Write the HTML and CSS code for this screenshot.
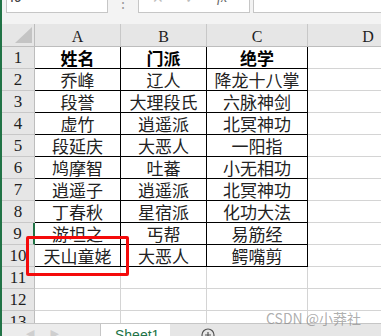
FILE: index.html
```html
<!DOCTYPE html>
<html lang="zh">
<head>
<meta charset="UTF-8" />
<title>Sheet1</title>
<link rel="stylesheet" href="styles.css">
</head>
<body>

<div class="app">
  <div class="top">
    <div class="formula-bar">
      <div class="name-box">I9<span class="drop">▾</span></div>
      <div class="dots">⋮</div>
      <div class="fx-box">
        <span class="fx-btn">✕</span>
        <span class="fx-btn">✓</span>
        <span class="fx">fx</span>
      </div>
      <div class="formula-input"></div>
    </div>
  </div>

  <div class="sheet" id="sheet">
    <!-- cells are rendered here -->
  </div>

  <div class="tabs">
    <div class="tab-nav"><span>◀</span><span>▶</span></div>
    <div class="tab active">Sheet1</div>
    <div class="tab-rest">
      <svg class="add-sheet" width="14" height="14" viewBox="0 0 14 14">
        <circle cx="7" cy="7" r="6" fill="none" stroke="#555" stroke-width="1.2"/>
        <path d="M7 4v6M4 7h6" stroke="#555" stroke-width="1.2"/>
      </svg>
    </div>
  </div>

  <div class="highlight"></div>
  <div class="watermark">CSDN @小莽社</div>
</div>

<script>
// sheet data (row 1 is the header row)
const data = [
  ['姓名', '门派', '绝学'],
  ['乔峰', '辽人', '降龙十八掌'],
  ['段誉', '大理段氏', '六脉神剑'],
  ['虚竹', '逍遥派', '北冥神功'],
  ['段延庆', '大恶人', '一阳指'],
  ['鸠摩智', '吐蕃', '小无相功'],
  ['逍遥子', '逍遥派', '北冥神功'],
  ['丁春秋', '星宿派', '化功大法'],
  ['游坦之', '丐帮', '易筋经'],
  ['天山童姥', '大恶人', '鳄嘴剪']
];
const totalRows = 13;

function cell(cls, text) {
  const div = document.createElement('div');
  div.className = cls;
  if (text) div.textContent = text;
  return div;
}

function renderSheet() {
  const sheet = document.getElementById('sheet');

  // column headers
  const corner = cell('corner');
  corner.innerHTML = '<svg width="17" height="16" viewBox="0 0 17 16"><path d="M17 0V16H0Z" fill="#c4c4c4"/></svg>';
  sheet.appendChild(corner);
  ['A', 'B', 'C', 'D'].forEach(letter => sheet.appendChild(cell('col-head', letter)));

  // rows
  for (let r = 1; r <= totalRows; r++) {
    sheet.appendChild(cell('row-head' + (r === 9 ? ' sel' : ''), String(r)));
    const values = data[r - 1] || [];
    for (let c = 0; c < 4; c++) {
      let cls = 'cell';
      if (values.length && c < 3) cls += ' boxed';
      if (r === 1) cls += ' bold';
      sheet.appendChild(cell(cls, values[c] || ''));
    }
  }
}

renderSheet();
</script>

</body>
</html>
```

FILE: styles.css
```css
html, body {
  margin: 0;
  padding: 0;
  height: 336px;
  overflow: hidden;
}
body {
  font-family: 'Liberation Serif', serif;
  background: #f3f3f3;
}
.app {
  position: relative;
  height: 336px;
  border-left: 2px solid #217346;
  overflow: hidden;
}

/* formula bar, cut off at the top */
.top {
  height: 24px;
  background: #f3f3f3;
}
.formula-bar {
  height: 13px;
  overflow: hidden;
  display: flex;
  align-items: flex-end;
}
.name-box {
  position: relative;
  box-sizing: border-box;
  margin-left: 4px;
  width: 102px;
  height: 24px;
  background: #fff;
  border: 1px solid #c6c6c6;
  font-family: 'Liberation Sans', sans-serif;
  font-size: 14px;
  line-height: 14px;
  color: #444;
  padding-left: 3px;
}
.drop {
  position: absolute;
  right: 6px;
  top: 0;
  font-size: 10px;
  color: #555;
}
.dots {
  width: 30px;
  height: 24px;
  text-align: center;
  color: #999;
  font-size: 14px;
  line-height: 30px;
}
.fx-box {
  box-sizing: border-box;
  width: 112px;
  height: 24px;
  background: #fff;
  border: 1px solid #c6c6c6;
  display: flex;
  align-items: flex-start;
  font-family: 'DejaVu Sans', sans-serif;
  font-size: 14px;
  line-height: 16px;
}
.fx-btn {
  color: #bdbdbd;
  margin-left: 13px;
  width: 20px;
}
.fx {
  font-family: 'Liberation Serif', serif;
  font-style: italic;
  color: #666;
  margin-left: 12px;
}
.formula-input {
  box-sizing: border-box;
  flex: 1;
  margin-left: 3px;
  height: 24px;
  background: #fff;
  border: 1px solid #c6c6c6;
  border-right: none;
}

/* grid */
.sheet {
  display: grid;
  grid-template-columns: 33px 86px 86px 101px 121px;
  grid-template-rows: 23px;
  grid-auto-rows: 22px;
  height: 299px;
  overflow: hidden;
  background: #fff;
}
.sheet > div {
  box-sizing: border-box;
  display: flex;
  align-items: center;
  justify-content: center;
  overflow: hidden;
  white-space: nowrap;
}
.corner {
  background: #e6e6e6;
  border-right: 1px solid #bdbdbd;
  border-bottom: 1px solid #bdbdbd;
  justify-content: flex-end !important;
  align-items: flex-end !important;
  padding: 0 2px 3px 0;
}
.col-head {
  background: #e6e6e6;
  border-right: 1px solid #c8c8c8;
  border-bottom: 1px solid #bdbdbd;
  font-size: 16px;
  color: #1f1f1f;
  padding-top: 3px;
}
.row-head {
  background: #e6e6e6;
  border-right: 1px solid #bdbdbd;
  border-bottom: 1px solid #c8c8c8;
  font-size: 17px;
  line-height: 18px;
  color: #1f1f1f;
}
.row-head.sel {
  border-right: 2px solid #217346;
}
.cell {
  border-right: 1px solid #d4d4d4;
  border-bottom: 1px solid #d4d4d4;
  font-family: 'Noto Sans CJK SC', sans-serif;
  font-size: 17px;
  line-height: 18px;
  color: #222;
}
.cell.boxed {
  border-right-color: #000;
  border-bottom-color: #000;
}
.cell.bold {
  font-weight: bold;
  color: #000;
}

/* sheet tabs */
.tabs {
  display: flex;
  height: 24px;
  background: #e6e6e6;
  border-top: 1px solid #c6c6c6;
}
.tab-nav {
  box-sizing: border-box;
  width: 99px;
  background: #ececec;
  border-right: 1px solid #c6c6c6;
  display: flex;
  gap: 16px;
  padding-left: 24px;
  font-family: 'DejaVu Sans', sans-serif;
  font-size: 11px;
  line-height: 20px;
  color: #cfcfcf;
}
.tab {
  width: 69px;
  background: #fff;
  font-family: 'Liberation Sans', sans-serif;
  font-size: 14px;
  line-height: 14px;
  padding: 4px 0 0 14px;
  box-sizing: border-box;
  color: #217346;
}
.tab-rest {
  flex: 1;
  padding: 4px 0 0 31px;
}

/* overlays */
.highlight {
  position: absolute;
  left: 24px;
  top: 236px;
  width: 97px;
  height: 34px;
  border: 3px solid #f40a0a;
  border-radius: 2px;
}
.watermark {
  position: absolute;
  left: 264px;
  top: 310px;
  font-family: 'Noto Sans CJK SC', sans-serif;
  font-size: 14px;
  line-height: 16px;
  color: rgba(130, 130, 130, 0.65);
}
```
